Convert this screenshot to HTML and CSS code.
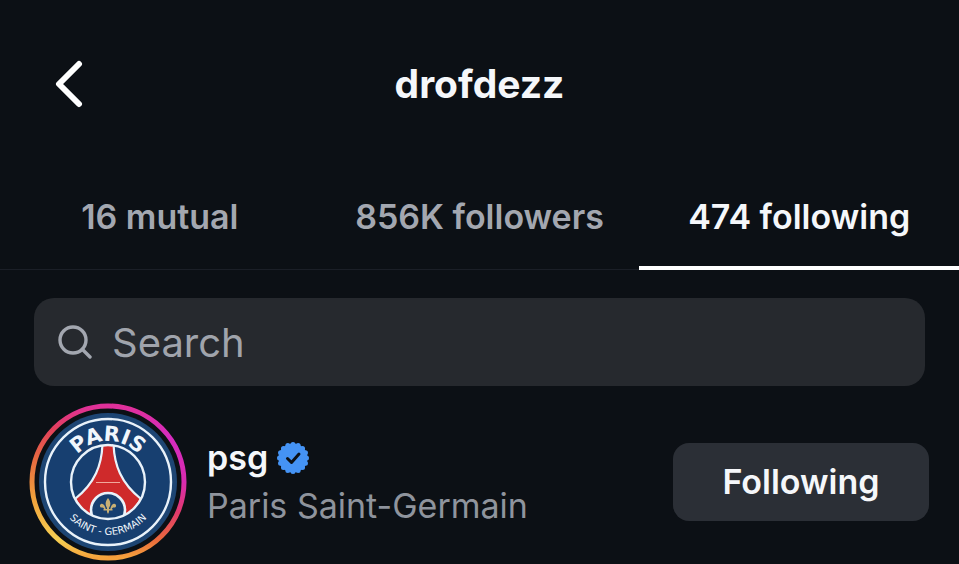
FILE: index.html
```
<!DOCTYPE html>
<html lang="en">
<head>
    <meta charset="UTF-8">
    <meta name="viewport" content="width=device-width, initial-scale=1.0">
    <title>drofdezz - Following</title>
    <link rel="stylesheet" href="styles.css">
</head>
<body>
    <header class="header">
        <button class="back-button" type="button" aria-label="Back">
            <svg class="back-icon" viewBox="0 0 32 48" aria-hidden="true">
                <path d="M25 4 L5 24 L25 44"/>
            </svg>
        </button>
        <h1 class="header-title">drofdezz</h1>
    </header>

    <nav class="tabs">
        <a class="tab" href="#mutual">16 mutual</a>
        <a class="tab" href="#followers">856K followers</a>
        <a class="tab active" href="#following" aria-current="page">474 following</a>
    </nav>

    <main>
        <label class="search">
            <svg class="search-icon" viewBox="0 0 34 34" aria-hidden="true">
                <circle cx="15" cy="15" r="13"/>
                <path d="M24.5 24.5 L32 32"/>
            </svg>
            <input class="search-input" type="search" placeholder="Search" aria-label="Search">
        </label>

        <ul class="user-list">
            <li class="user">
                <svg class="avatar" viewBox="0 0 158 158" role="img" aria-label="psg">
                    <defs>
                        <linearGradient id="ring-right" x1="0" y1="0" x2="0" y2="1">
                            <stop offset="0" stop-color="#e0309a"/>
                            <stop offset="0.2" stop-color="#d62cc0"/>
                            <stop offset="0.5" stop-color="#d92bb0"/>
                            <stop offset="0.7" stop-color="#e23a6c"/>
                            <stop offset="0.88" stop-color="#ea6a3c"/>
                            <stop offset="1" stop-color="#f5a23c"/>
                        </linearGradient>
                        <linearGradient id="ring-left" x1="0" y1="0" x2="0" y2="1">
                            <stop offset="0" stop-color="#e0309a"/>
                            <stop offset="0.15" stop-color="#e2405c"/>
                            <stop offset="0.35" stop-color="#e66a40"/>
                            <stop offset="0.6" stop-color="#f0a03c"/>
                            <stop offset="0.88" stop-color="#f6cf52"/>
                            <stop offset="1" stop-color="#f5a23c"/>
                        </linearGradient>
                        <clipPath id="crest-inner">
                            <circle cx="79" cy="79" r="37"/>
                        </clipPath>
                        <path id="arc-top" d="M38 79 A41 41 0 0 1 120 79"/>
                        <path id="arc-bottom" d="M26 79 A53 53 0 0 0 132 79"/>
                    </defs>

                    <!-- story ring -->
                    <path class="ring" stroke="url(#ring-right)" d="M79 3 A76 76 0 0 1 79 155"/>
                    <path class="ring" stroke="url(#ring-left)" d="M79 3 A76 76 0 0 0 79 155"/>

                    <!-- crest -->
                    <circle cx="79" cy="79" r="69" fill="#1d4573"/>
                    <circle cx="79" cy="79" r="63" fill="#173f70" stroke="#e9f2fa" stroke-width="2.4"/>
                    <g clip-path="url(#crest-inner)">
                        <path d="M73.5 40 C73 62 66 80 46 96 L62 120 H96 L112 96 C92 80 85 62 84.5 40 Z" fill="#cf2a2b" stroke="#e9f2fa" stroke-width="2.2"/>
                        <path d="M67 79.5 H91" stroke="#f0a89c" stroke-width="1.2"/>
                        <circle cx="79" cy="107" r="17" fill="#173f70" stroke="#e9f2fa" stroke-width="2.6"/>
                    </g>
                    <circle cx="79" cy="79" r="37" fill="none" stroke="#e9f2fa" stroke-width="2.4"/>
                    <g class="lily">
                        <path d="M79 95 C76 99 76 102 78 105 V109 L79 111 L80 109 V105 C82 102 82 99 79 95 Z"/>
                        <path d="M77 107 C76 102 74 100 72 101 C70 102 71 105 73 104.5 C75 104.5 75 106 76 107 Z"/>
                        <path d="M81 107 C82 102 84 100 86 101 C88 102 87 105 85 104.5 C83 104.5 83 106 82 107 Z"/>
                        <path d="M74.5 106 H83.5 V107.5 H74.5 Z"/>
                    </g>
                    <text class="crest-top"><textPath href="#arc-top" startOffset="50%">PARIS</textPath></text>
                    <text class="crest-bottom"><textPath href="#arc-bottom" startOffset="50%">SAINT - GERMAIN</textPath></text>
                </svg>

                <div class="user-details">
                    <div class="user-name">
                        psg
                        <svg class="verified" viewBox="-17 -17 34 34" role="img" aria-label="Verified">
                            <circle r="14.5" fill="#4593f4"/>
                            <circle class="scallops" r="13.5" pathLength="160"/>
                            <path class="check" d="M-5.5 0.5 L-1.5 4.5 L6 -4"/>
                        </svg>
                    </div>
                    <div class="full-name">Paris Saint-Germain</div>
                </div>

                <button class="follow-button" type="button">Following</button>
            </li>
        </ul>
    </main>
</body>
</html>
```

FILE: styles.css
```
* {
    box-sizing: border-box;
}
body {
    margin: 0;
    background-color: #0c1015;
    color: #f5f7fa;
    font-family: Inter, "Liberation Sans", sans-serif;
    font-size: 34px;
    line-height: 48px;
}
.header {
    display: grid;
    grid-template-columns: 96px 1fr 96px;
    align-items: center;
    padding: 56px 0;
}
.back-button {
    display: flex;
    justify-content: flex-end;
    padding: 0 10px;
    border: 0;
    background: none;
}
.back-icon {
    width: 32px;
    height: 48px;
    fill: none;
    stroke: #ffffff;
    stroke-width: 6;
    stroke-linecap: round;
    stroke-linejoin: round;
}
.header-title {
    margin: 0;
    font-size: 39px;
    font-weight: 700;
    line-height: 56px;
    text-align: center;
}
.tabs {
    display: flex;
    box-shadow: inset 0 -1px #1b1f27;
}
.tab {
    flex: 1;
    padding: 25px 0;
    border-bottom: 4px solid transparent;
    color: #a3a7b0;
    font-weight: 600;
    text-align: center;
    text-decoration: none;
    white-space: nowrap;
}
.tab.active {
    border-bottom-color: #ffffff;
    color: #f5f7fa;
}
.search {
    display: flex;
    align-items: center;
    gap: 20px;
    margin: 28px 34px 17px;
    padding: 20px 24px;
    border-radius: 20px;
    background-color: #26292e;
}
.search-icon {
    width: 34px;
    height: 34px;
    fill: none;
    stroke: #a3a7b0;
    stroke-width: 3.4;
    stroke-linecap: round;
}
.search-input {
    flex: 1;
    min-width: 0;
    height: 48px;
    padding: 0;
    border: 0;
    outline: 0;
    background: none;
    color: #f5f7fa;
    font-family: inherit;
    font-size: 40px;
}
.search-input::placeholder {
    color: #a0a4ac;
}
.user-list {
    margin: 0;
    padding: 0;
    list-style: none;
}
.user {
    display: flex;
    align-items: center;
    gap: 20px;
    padding: 0 30px 0 29px;
}
.avatar {
    flex: none;
    width: 158px;
    height: 158px;
}
.ring {
    fill: none;
    stroke-width: 5;
}
.lily {
    fill: #c9b074;
}
.crest-top,
.crest-bottom {
    fill: #f0f6fc;
    text-anchor: middle;
}
.crest-top {
    font-family: "DejaVu Sans", sans-serif;
    font-size: 21px;
    font-weight: 700;
}
.crest-bottom {
    font-family: "DejaVu Sans", sans-serif;
    font-size: 10px;
}
.user-details {
    flex: 1;
    min-width: 0;
}
.user-name {
    display: flex;
    align-items: center;
    gap: 8px;
    font-weight: 600;
}
.verified {
    width: 34px;
    height: 34px;
}
.scallops {
    fill: none;
    stroke: #4593f4;
    stroke-width: 5;
    stroke-linecap: round;
    stroke-dasharray: 0 10;
}
.check {
    fill: none;
    stroke: #0c1015;
    stroke-width: 3;
    stroke-linecap: round;
    stroke-linejoin: round;
}
.full-name {
    color: #8f949d;
}
.follow-button {
    width: 256px;
    padding: 15px 0;
    border: 0;
    border-radius: 16px;
    background-color: #2b2f36;
    color: #f5f7fa;
    font-family: inherit;
    font-size: 34px;
    font-weight: 600;
    line-height: 48px;
}
```
